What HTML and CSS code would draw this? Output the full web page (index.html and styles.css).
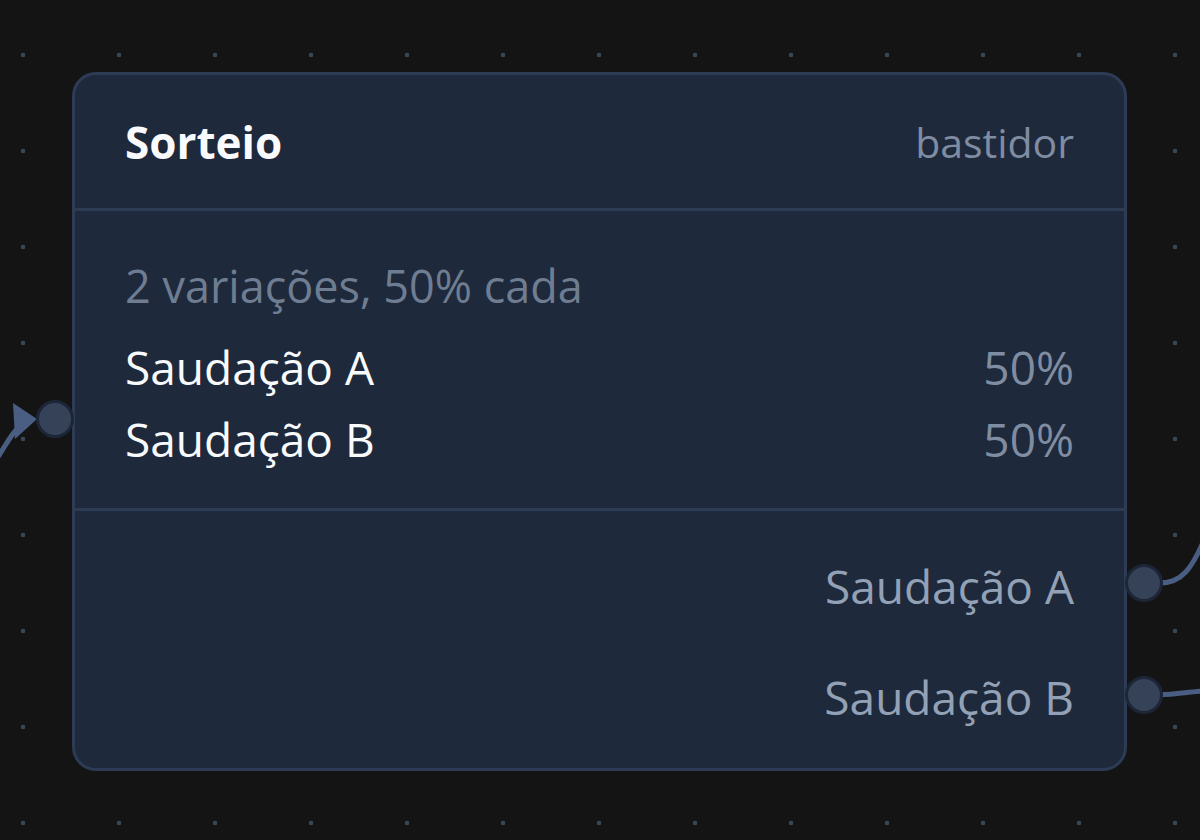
FILE: index.html
```html
<!DOCTYPE html>
<html lang="pt">
<head>
    <meta charset="UTF-8">
    <title>Sorteio</title>
    <link rel="stylesheet" href="styles.css">
</head>
<body>
<div class="canvas">
    <svg class="edges" width="1200" height="840" viewBox="0 0 1200 840">
        <!-- entrada -->
        <path d="M -12 470 C 2 455, 8 436, 20 426" />
        <polygon points="13,403 37,419 15,439" />
        <!-- saidas -->
        <path d="M 1160 583 C 1182 583, 1192 568, 1204 540" />
        <path d="M 1160 695 C 1176 694, 1190 692, 1204 691" />
    </svg>

    <div class="node">
        <div class="node-head">
            <span class="node-title">Sorteio</span>
            <span class="node-kind">bastidor</span>
        </div>
        <div class="node-body">
            <p class="summary">2 variações, 50% cada</p>
            <div class="variant"><span>Saudação A</span><span class="pct">50%</span></div>
            <div class="variant"><span>Saudação B</span><span class="pct">50%</span></div>
        </div>
        <div class="node-outputs">
            <div class="output">Saudação A</div>
            <div class="output">Saudação B</div>
        </div>
    </div>

    <span class="handle handle-in"></span>
    <span class="handle handle-a"></span>
    <span class="handle handle-b"></span>
</div>
</body>
</html>
```

FILE: styles.css
```css
html, body {
    margin: 0;
    height: 100%;
}
body {
    background-color: #141414;
    background-image: radial-gradient(circle, #3a4659 2px, transparent 2.6px);
    background-size: 96px 96px;
    background-position: -25px 7px;
    font-family: "Open Sans", "Noto Sans", sans-serif;
    overflow: hidden;
}
.canvas {
    position: relative;
    width: 1200px;
    height: 840px;
    padding: 72px 0 0 72px;
    box-sizing: border-box;
}
.edges {
    position: absolute;
    left: 0;
    top: 0;
}
.edges path {
    fill: none;
    stroke: #4a5d82;
    stroke-width: 5;
    stroke-linecap: round;
}
.edges polygon {
    fill: #4a5d82;
}
.node {
    position: relative;
    width: 1055px;
    height: 699px;
    box-sizing: border-box;
    background: #1e293b;
    border: 3px solid #2d3b54;
    border-radius: 24px;
    display: flex;
    flex-direction: column;
}
.node-head {
    height: 133px;
    padding: 0 50px;
    display: flex;
    align-items: center;
    justify-content: space-between;
    border-bottom: 3px solid #2d3b54;
}
.node-title {
    color: #f8fafc;
    font-weight: 700;
    font-size: 44px;
}
.node-kind {
    color: #7f8ca1;
    font-size: 41px;
}
.node-body {
    height: 300px;
    box-sizing: border-box;
    padding: 45px 50px 0;
    border-bottom: 3px solid #2d3b54;
}
.summary {
    margin: 0 0 15px;
    line-height: 60px;
    font-size: 45px;
    color: #6f7d92;
}
.variant {
    display: flex;
    justify-content: space-between;
    line-height: 72px;
    font-size: 46px;
    color: #f8fafc;
}
.pct {
    color: #7f8ca1;
}
.node-outputs {
    padding: 20px 50px 0;
}
.output {
    height: 111px;
    line-height: 111px;
    text-align: right;
    font-size: 46px;
    color: #93a1b6;
}
.handle {
    position: absolute;
    width: 32px;
    height: 32px;
    border-radius: 50%;
    background: #364257;
    border: 3px solid #1d2638;
}
.handle-in {
    left: 36px;
    top: 400px;
}
.handle-a {
    left: 1125px;
    top: 564px;
}
.handle-b {
    left: 1125px;
    top: 676px;
}
```
